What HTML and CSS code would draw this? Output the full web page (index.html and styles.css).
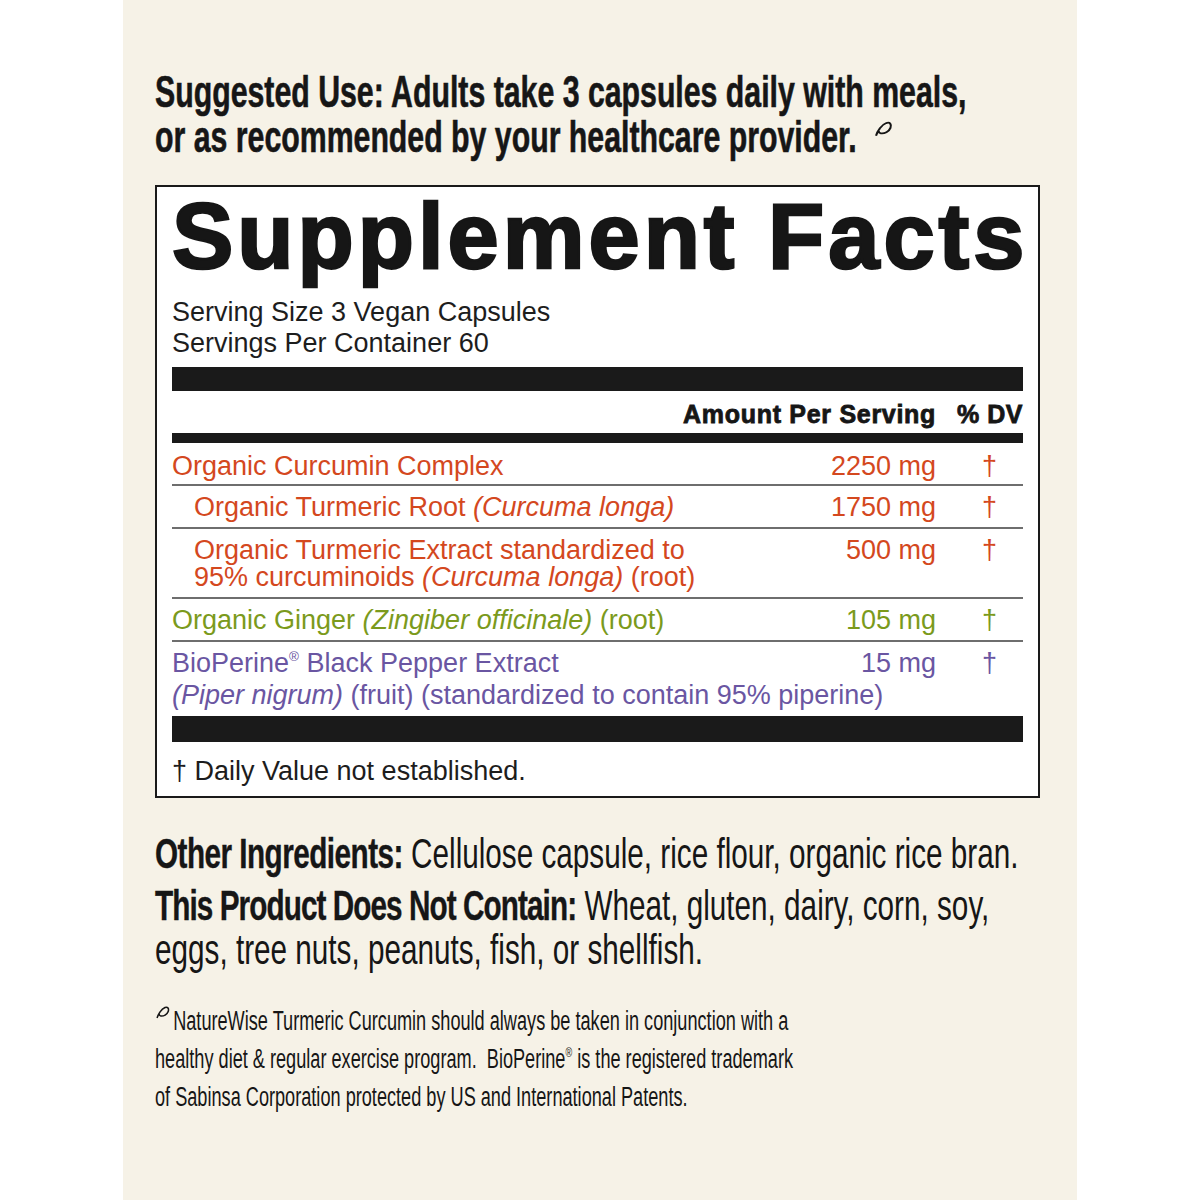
FILE: index.html
```html
<!DOCTYPE html>
<html>
<head>
<meta charset="utf-8">
<link rel="stylesheet" href="styles.css">
</head>
<body>
<div class="panel">
  <div class="cond use">
    <b>Suggested Use: Adults take 3 capsules daily with meals,<br>or as recommended by your healthcare provider.</b><svg class="curl curl-top" viewBox="0 0 14 14" preserveAspectRatio="none"><path d="M2 13 C3 9 6 4 9.5 2.5 C12 1.5 13.5 3.5 12.5 6.5 C11.5 9.5 8 11.5 5.5 11 C3.5 10.5 3.5 8 5 7"/></svg>
  </div>

  <div class="facts">
    <div class="facts-title">Supplement Facts</div>
    <div class="serving">Serving Size 3 Vegan Capsules<br>Servings Per Container 60</div>
    <div class="bar bar-thick"></div>
    <div class="head-row">
      <span class="head-amt">Amount Per Serving</span>
      <span class="head-dv">% DV</span>
    </div>
    <div class="bar bar-mid"></div>

    <div class="row orange first">
      <span class="name">Organic Curcumin Complex</span>
      <span class="amt">2250 mg</span>
      <span class="dv">†</span>
    </div>
    <div class="row orange sep">
      <span class="name sub">Organic Turmeric Root <em>(Curcuma longa)</em></span>
      <span class="amt">1750 mg</span>
      <span class="dv">†</span>
    </div>
    <div class="row orange sep">
      <span class="name sub">Organic Turmeric Extract standardized to<br>95% curcuminoids <em>(Curcuma longa)</em> (root)</span>
      <span class="amt">500 mg</span>
      <span class="dv">†</span>
    </div>
    <div class="row green sep">
      <span class="name">Organic Ginger <em>(Zingiber officinale)</em> (root)</span>
      <span class="amt">105 mg</span>
      <span class="dv">†</span>
    </div>
    <div class="row purple sep last">
      <span class="name">BioPerine<sup>®</sup> Black Pepper Extract</span>
      <span class="amt">15 mg</span>
      <span class="dv">†</span>
      <span class="full"><em>(Piper nigrum)</em> (fruit) (standardized to contain 95% piperine)</span>
    </div>

    <div class="bar bar-foot"></div>
    <div class="dvnote">† Daily Value not established.</div>
  </div>

  <div class="cond cond-lg other">
    <b>Other Ingredients:</b> Cellulose capsule, rice flour, organic rice bran.
  </div>
  <div class="cond cond-lg contain">
    <b>This Product Does Not Contain:</b> Wheat, gluten, dairy, corn, soy,<br>eggs, tree nuts, peanuts, fish, or shellfish.
  </div>

  <div class="cond note">
    <svg class="curl curl-note" viewBox="0 0 14 14" preserveAspectRatio="none"><path d="M2 13 C3 9 6 4 9.5 2.5 C12 1.5 13.5 3.5 12.5 6.5 C11.5 9.5 8 11.5 5.5 11 C3.5 10.5 3.5 8 5 7"/></svg>NatureWise Turmeric Curcumin should always be taken in conjunction with a<br>healthy diet &amp; regular exercise program.&nbsp; BioPerine<sup>®</sup> is the registered trademark<br>of Sabinsa Corporation protected by US and International Patents.
  </div>
</div>
</body>
</html>
```

FILE: styles.css
```css
html, body {
  margin: 0;
  padding: 0;
  background: #ffffff;
}

.panel {
  width: 954px;
  height: 1200px;
  margin-left: 123px;
  background: #f6f2e7;
  padding: 69px 0 0 32px;
  box-sizing: border-box;
  overflow: hidden;
  color: #161616;
  font-family: "Liberation Sans", Arial, sans-serif;
}

.cond {
  white-space: nowrap;
  transform-origin: 0 0;
}

.use {
  font-size: 44px;
  line-height: 45px;
  height: 90px;
  transform: scaleX(0.688);
  -webkit-text-stroke: 0.6px #161616;
}

.use b {
  font-weight: 700;
}

.cond-lg {
  font-size: 42px;
  line-height: 44px;
  transform: scaleX(0.707);
}

.cond-lg b {
  font-weight: 700;
  -webkit-text-stroke: 0.4px #161616;
}

.other b {
  letter-spacing: -0.75px;
}

.contain b {
  letter-spacing: -1.3px;
}

.curl {
  fill: none;
  stroke: #161616;
}

.curl-top {
  width: 28px;
  height: 17px;
  stroke-width: 1.5;
  margin-left: 24px;
  vertical-align: 15px;
}

.facts {
  margin-top: 26px;
  width: 885px;
  box-sizing: border-box;
  border: 2px solid #1a1a1a;
  background: #ffffff;
  padding: 3px 15px 9px 15px;
  font-size: 27px;
  color: #1d1d1d;
}

.facts-title {
  font-size: 92px;
  line-height: 92px;
  font-weight: 700;
  letter-spacing: 4px;
  -webkit-text-stroke: 2.5px #161616;
  color: #161616;
  white-space: nowrap;
}

.serving {
  margin-top: 15px;
  line-height: 31px;
}

.bar {
  background: #1a1a1a;
}

.bar-thick {
  height: 24px;
  margin-top: 8px;
}

.head-row {
  margin-top: 8px;
  display: grid;
  grid-template-columns: 1fr 67px;
  column-gap: 20px;
  font-size: 25px;
  line-height: 30px;
  font-weight: 700;
  letter-spacing: 0.7px;
  -webkit-text-stroke: 0.8px #161616;
  color: #161616;
}

.head-amt {
  text-align: right;
}

.head-dv {
  text-align: right;
  letter-spacing: 0.5px;
}

.bar-mid {
  height: 10px;
  margin-top: 4px;
}

.row {
  display: grid;
  grid-template-columns: 1fr auto 67px;
  column-gap: 20px;
  line-height: 27px;
  padding: 8px 0 6px 0;
}

.row.first {
  padding: 10px 0 4px 0;
}

.row.sep {
  border-top: 2px solid #6e6e6e;
}

.row.last {
  padding-bottom: 7px;
}

.name.sub {
  padding-left: 22px;
}

.amt {
  text-align: right;
}

.dv {
  text-align: center;
}

.full {
  grid-column: 1 / -1;
  margin-top: 5px;
}

.row sup, .note sup {
  font-size: 0.5em;
  vertical-align: 0.8em;
  line-height: 0;
}

.orange { color: #d4481e; }
.green { color: #7b9a1c; }
.purple { color: #6a56a2; }

.bar-foot {
  height: 26px;
}

.dvnote {
  margin-top: 14px;
  line-height: 31px;
}

.other {
  margin-top: 34px;
}

.contain {
  margin-top: 8px;
}

.note {
  margin-top: 30px;
  font-size: 27px;
  line-height: 38px;
  transform: scaleX(0.672);
}

.curl-note {
  width: 22px;
  height: 14px;
  stroke-width: 1.5;
  margin-right: 5px;
  vertical-align: 11px;
}
```
